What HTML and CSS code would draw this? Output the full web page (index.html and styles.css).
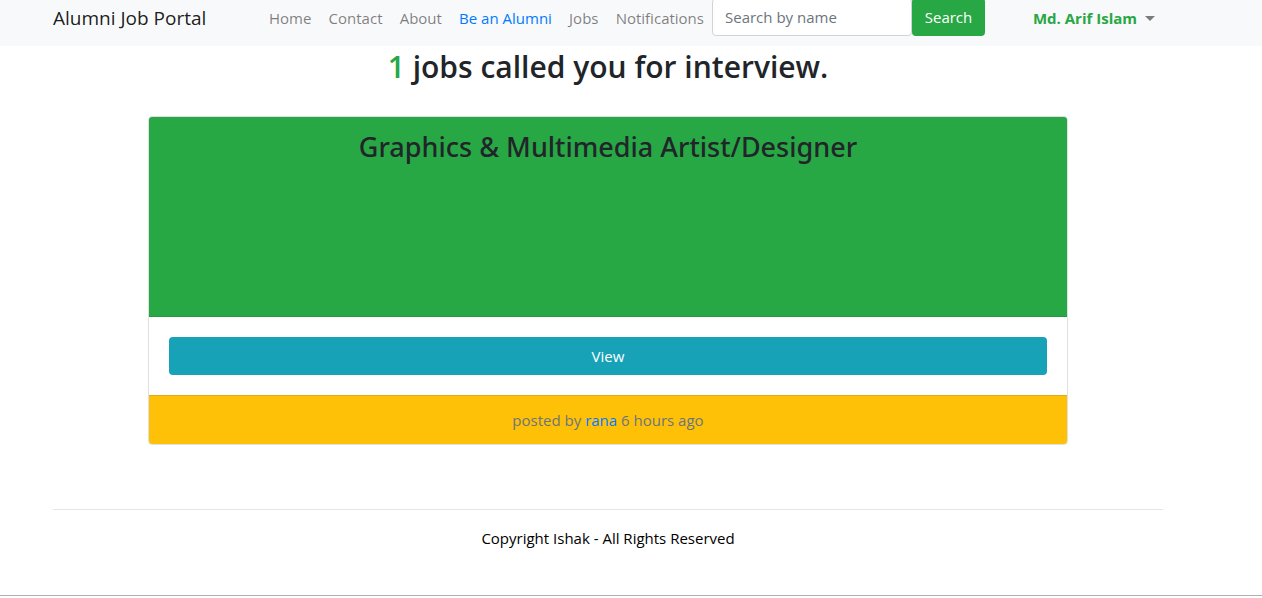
FILE: index.html
```html
<!DOCTYPE html>
<html lang="en">
<head>
<meta charset="utf-8">
<title>Alumni Job Portal</title>
<link rel="stylesheet" href="styles.css">
</head>
<body>
<header class="navbar">
  <div class="container navbar-inner">
    <a class="brand" href="#">Alumni Job Portal</a>
    <nav class="nav">
      <a class="nav-link" href="#">Home</a>
      <a class="nav-link" href="#">Contact</a>
      <a class="nav-link" href="#">About</a>
      <a class="nav-link nav-link-primary" href="#">Be an Alumni</a>
      <a class="nav-link" href="#">Jobs</a>
      <a class="nav-link" href="#">Notifications</a>
    </nav>
    <form class="search">
      <input class="search-input" type="text" placeholder="Search by name" aria-label="Search by name">
      <button class="btn btn-success" type="submit">Search</button>
    </form>
    <button class="user-menu" type="button" aria-haspopup="true">Md. Arif Islam <span class="caret"></span></button>
  </div>
</header>
<main class="container main">
  <h2 class="title"><span class="count">1</span> jobs called you for interview.</h2>
  <article class="card">
    <div class="card-header"><h3 class="job-title">Graphics &amp; Multimedia Artist/Designer</h3></div>
    <div class="card-body"><button class="btn btn-info" type="button">View</button></div>
    <div class="card-footer">posted by <a class="author" href="#">rana</a> 6 hours ago</div>
  </article>
</main>
<footer class="footer">
  <div class="container"><p class="copyright">Copyright Ishak - All Rights Reserved</p></div>
</footer>
</body>
</html>
```
FILE: styles.css
```css
* { box-sizing: border-box; }
body {
  margin: 0;
  background: #fff;
  color: #212529;
  font-family: "Segoe UI", "Open Sans", "Noto Sans", sans-serif;
  font-size: 15px;
  line-height: 24px;
  overflow: hidden;
}
a { text-decoration: none; }
.navbar, .main, .footer { padding-right: 46px; }
.container { max-width: 1110px; margin: 0 auto; }
.navbar { margin-top: -10px; padding-top: 8px; padding-bottom: 10px; background: #f8f9fa; }
.navbar-inner { display: flex; align-items: center; }
.brand { flex: 0 0 208px; padding-top: 2px; color: rgba(0, 0, 0, .9); font-size: 19px; font-weight: 400; white-space: nowrap; }
.nav { display: flex; flex: 0 0 451px; justify-content: space-between; padding-top: 2px; }
.nav-link { padding: 0 8px; color: rgba(0, 0, 0, .5); white-space: nowrap; }
.nav-link-primary { color: #007bff; }
.search { display: flex; }
.search-input {
  width: 200px;
  height: 38px;
  padding: 6px 12px;
  border: 1px solid #ced4da;
  border-radius: 4px;
  background: #fff;
  color: #495057;
  font: inherit;
}
.search-input::placeholder { color: #6c757d; opacity: 1; }
.btn {
  height: 38px;
  padding: 6px 12px;
  border: 0;
  border-radius: 4px;
  color: #fff;
  font: inherit;
  cursor: pointer;
}
.btn-success { width: 73px; background: #28a745; }
.btn-info { display: block; width: 100%; background: #17a2b8; }
.user-menu {
  display: flex;
  align-items: center;
  gap: 8px;
  margin-left: auto;
  padding: 2px 8px 0;
  border: 0;
  background: none;
  color: #28a745;
  font: inherit;
  font-weight: 700;
  white-space: nowrap;
}
.caret { border: 5px solid transparent; border-top-color: #7c7c7d; border-bottom: 0; }
.main.container { max-width: none; }
.title { margin: 0; padding: 2px 0 30px; font-size: 30px; font-weight: 600; line-height: 38px; text-align: center; }
.count { color: #28a745; }
.card {
  max-width: 920px;
  margin: 0 auto;
  border: 1px solid #dfdfdf;
  border-radius: 4px;
  overflow: hidden;
  text-align: center;
}
.card-header { min-height: 200px; padding: 12px 20px; border-bottom: 1px solid #249a40; background: #28a745; }
.job-title { margin: 0; font-family: "Segoe UI", "Noto Sans", sans-serif; font-size: 27px; font-weight: 500; line-height: 36px; }
.card-body { padding: 20px; }
.card-footer { padding: 12px 20px; border-top: 1px solid #dfab14; background: #ffc107; color: #6c757d; }
.author { color: #007bff; }
.footer { margin-top: 64px; padding-bottom: 45px; border-bottom: 1px solid #b0b0b0; }
.copyright { margin: 0; padding-top: 16px; border-top: 1px solid #e5e5e5; color: #000; text-align: center; }
```
